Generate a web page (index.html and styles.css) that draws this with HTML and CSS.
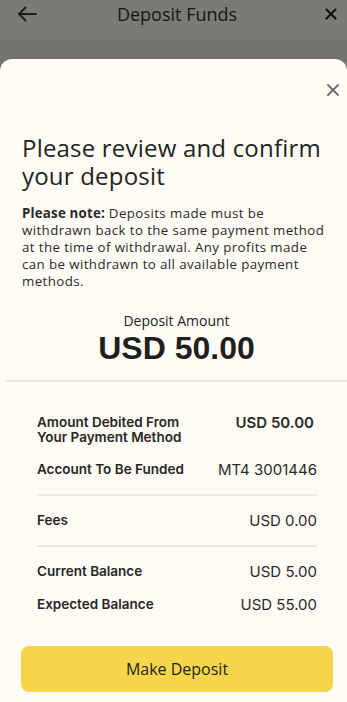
FILE: index.html
```html
<!DOCTYPE html>
<html lang="en">

<head>
    <meta charset="UTF-8">
    <meta name="viewport" content="width=device-width, initial-scale=1.0">
    <title>Deposit Funds</title>
    <link rel="stylesheet" href="styles.css">
</head>

<body>
    <div class="topbar">
        <span class="back">
            <svg width="20" height="16" viewBox="0 0 20 16"><path d="M19 8H2M8.5 1.5L2 8l6.5 6.5" fill="none" stroke="#1d1d1b" stroke-width="2" stroke-linecap="round" stroke-linejoin="round"/></svg>
        </span>
        <h1>Deposit Funds</h1>
        <span class="close-top">
            <svg width="12" height="12" viewBox="0 0 12 12"><path d="M1.5 1.5l9 9M10.5 1.5l-9 9" stroke="#111" stroke-width="2.2" stroke-linecap="round"/></svg>
        </span>
    </div>
    <div class="backdrop"></div>

    <div class="sheet">
        <div class="sheet-close">
            <svg width="12" height="12" viewBox="0 0 12 12"><path d="M1 1l10 10M11 1L1 11" stroke="#6b6b6b" stroke-width="1.8" stroke-linecap="round"/></svg>
        </div>

        <h2 class="title">Please review and confirm your deposit</h2>
        <p class="note"><b>Please note:</b> Deposits made must be<br>withdrawn back to the same payment method<br>at the time of withdrawal. Any profits made<br>can be withdrawn to all available payment<br>methods.</p>

        <div class="amount">
            <div class="amount-label">Deposit Amount</div>
            <div class="amount-value">USD 50.00</div>
        </div>

        <div class="details">
            <div class="group">
                <div class="row">
                    <span class="label">Amount Debited From<br>Your Payment Method</span>
                    <span class="value strong">USD 50.00</span>
                </div>
                <div class="row">
                    <span class="label">Account To Be Funded</span>
                    <span class="value">MT4 3001446</span>
                </div>
            </div>
            <div class="group">
                <div class="row">
                    <span class="label">Fees</span>
                    <span class="value">USD 0.00</span>
                </div>
            </div>
            <div class="group">
                <div class="row">
                    <span class="label">Current Balance</span>
                    <span class="value">USD 5.00</span>
                </div>
                <div class="row">
                    <span class="label">Expected Balance</span>
                    <span class="value">USD 55.00</span>
                </div>
            </div>
        </div>

        <button class="deposit-btn">Make Deposit</button>
    </div>
</body>

</html>
```

FILE: styles.css
```css
body {
    margin: 0;
    width: 347px;
    height: 702px;
    overflow: hidden;
    background-color: #73726e;
    font-family: "Open Sans", sans-serif;
    color: #222;
}

svg {
    display: block;
}

.topbar {
    height: 40px;
    background: #7b7a76;
    display: flex;
    align-items: flex-start;
    justify-content: space-between;
    padding: 0 10px 0 17px;
    box-sizing: border-box;
}

.topbar h1 {
    margin: 0;
    margin-top: 2px;
    font-size: 18px;
    font-weight: 500;
    color: #161615;
}

.back {
    margin-top: 6px;
}

.close-top {
    width: 20px;
    display: flex;
    justify-content: flex-end;
    margin-top: 8px;
}

.backdrop {
    height: 19px;
}

.sheet {
    background: #fffcf5;
    border-radius: 12px 12px 0 0;
    height: 643px;
    display: flex;
    flex-direction: column;
}

.sheet-close {
    display: flex;
    justify-content: flex-end;
    padding: 25px 8px 0 0;
    height: 12px;
}

.title {
    margin: 38px 22px 0;
    font-size: 24px;
    font-weight: 500;
    letter-spacing: 0.2px;
    line-height: 28px;
    color: #232323;
}

.note {
    margin: 15px 10px 0 22px;
    font-size: 13.3px;
    letter-spacing: 0.4px;
    line-height: 17px;
    color: #2a2a2a;
    white-space: nowrap;
}

.note b {
    font-weight: 700;
    letter-spacing: 0.2px;
}

.amount {
    text-align: center;
    margin-top: 22px;
    padding-bottom: 14px;
    border-bottom: 2px solid #ebe9e3;
    margin-left: 6px;
}

.amount-label {
    font-size: 14px;
    font-weight: 500;
    line-height: 18px;
}

.amount-value {
    font-family: "Liberation Sans", Arial, sans-serif;
    font-size: 32px;
    font-weight: 700;
    line-height: 36px;
    color: #1f1f1f;
}

.details {
    margin: 33px 30px 0 37px;
    font-family: Inter, sans-serif;
}

.group {
    border-bottom: 2px solid #ebe9e3;
    padding-bottom: 16px;
    margin-bottom: 17px;
}

.group:last-child {
    border-bottom: none;
}

.row {
    display: flex;
    justify-content: space-between;
    align-items: flex-start;
    margin-bottom: 17px;
}

.group .row:last-child {
    margin-bottom: 0;
}

.label {
    font-size: 13.5px;
    font-weight: 600;
    line-height: 15px;
    color: #262626;
}

.value {
    font-size: 15px;
    line-height: 16px;
    color: #2a2a2a;
}

.value.strong {
    font-weight: 600;
    margin-right: 3px;
}

.deposit-btn {
    margin: auto 14px 10px 21px;
    height: 46px;
    border: none;
    border-radius: 8px;
    background: #f7d54b;
    font-family: "Open Sans", sans-serif;
    font-size: 16px;
    font-weight: 500;
    color: #222;
}
```
